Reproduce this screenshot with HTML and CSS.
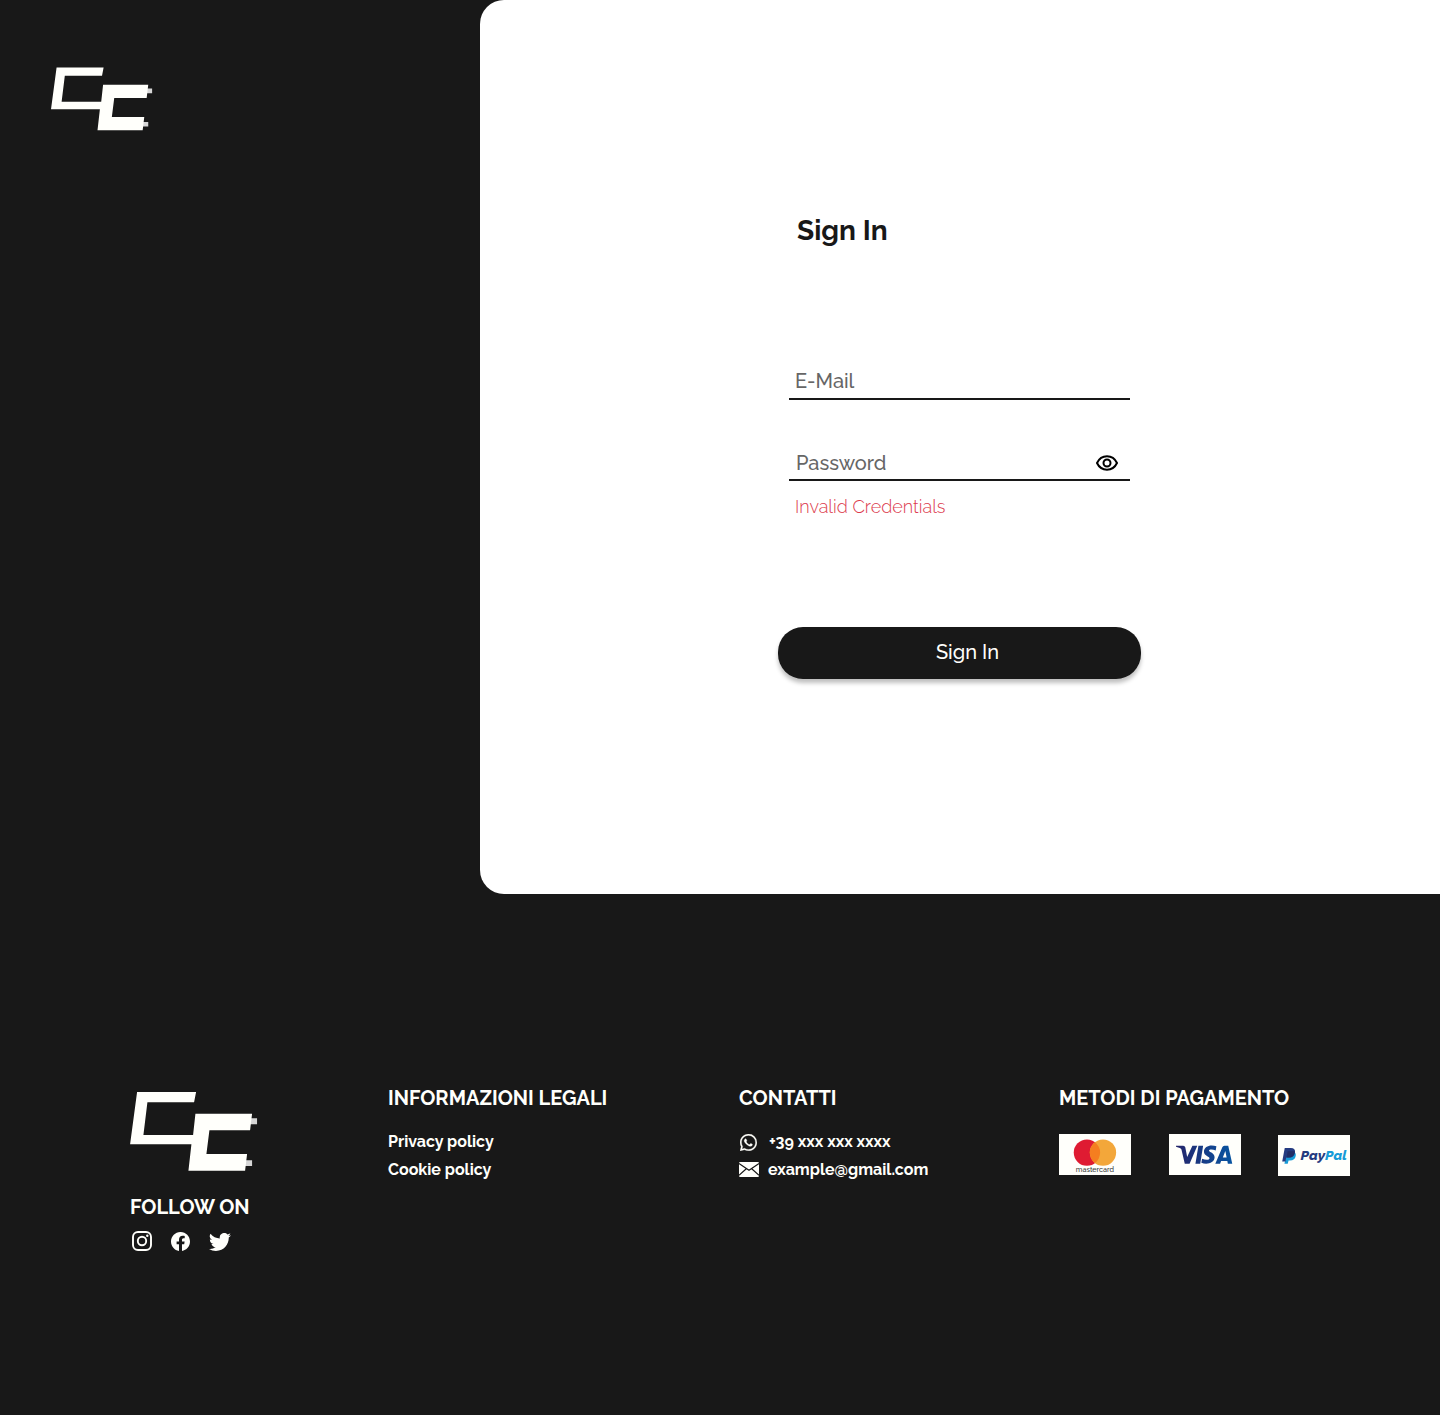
FILE: index.html
```html
<!DOCTYPE html>
<html lang="it">
<head>
<meta charset="utf-8">
<title>Sign In</title>
<link rel="stylesheet" href="styles.css">
</head>
<body>
<svg class="defs" aria-hidden="true">
  <symbol id="logo" viewBox="30 36 382 237">
    <path fill="#d6d6d6" d="M391 115h20v18h-22zM376 241h20v17h-22z"/>
    <path fill="#fffffb" d="M51 36H228L222 67H82L70 165H219L226 101H396L390 151H268L259 222H381L375 272H205L214 193H30z"/>
  </symbol>
</svg>
<main class="hero">
  <aside class="side"><svg class="side-logo"><use href="#logo"/></svg></aside>
  <section class="panel">
    <form class="form">
      <h1 class="title">Sign In</h1>
      <label class="field email">E-Mail</label>
      <label class="field password">Password
        <svg class="eye" viewBox="0 0 22 16" fill="none" stroke="#000" stroke-width="2"><path d="M1 8C3 3.800 6.600 1.300 11 1.300S19 3.800 21 8C19 12.200 15.400 14.700 11 14.700S3 12.200 1 8z"/><circle cx="11" cy="8" r="3.500"/></svg>
      </label>
      <p class="error">Invalid Credentials</p>
      <button class="submit" type="button">Sign In</button>
    </form>
  </section>
</main>
<footer class="footer">
  <div class="brand">
    <svg class="footer-logo"><use href="#logo"/></svg>
    <h2 class="heading">FOLLOW ON</h2>
    <div class="social">
      <svg class="instagram" viewBox="0 0 20 20" fill="none" stroke="#fffffb" stroke-width="1.900"><rect x="1" y="1" width="18" height="18" rx="5"/><circle cx="10" cy="10" r="4.200"/><circle cx="15.300" cy="4.700" r="1.200" fill="#fffffb" stroke="none"/></svg>
      <svg class="facebook" viewBox="0 0 16 16" fill="#fffffb"><path d="M16 8.049c0-4.446-3.582-8.050-8-8.050C3.580 0-.002 3.603-.002 8.050c0 4.017 2.926 7.347 6.750 7.951v-5.625h-2.030V8.050H6.750V6.275c0-2.017 1.195-3.131 3.022-3.131.876 0 1.791.157 1.791.157v1.980h-1.009c-.993 0-1.303.621-1.303 1.258v1.510h2.218l-.354 2.326H9.250V16c3.824-.604 6.750-3.934 6.750-7.951z"/></svg>
      <svg class="twitter" viewBox="0 2 16 13" preserveAspectRatio="none" fill="#fffffb"><path d="M5.026 15c6.038 0 9.341-5.003 9.341-9.334 0-.14 0-.282-.006-.422A6.685 6.685 0 0 0 16 3.542a6.658 6.658 0 0 1-1.889.518 3.301 3.301 0 0 0 1.447-1.817 6.533 6.533 0 0 1-2.087.793A3.286 3.286 0 0 0 7.875 6.030a9.325 9.325 0 0 1-6.767-3.429 3.289 3.289 0 0 0 1.018 4.382A3.323 3.323 0 0 1 .640 6.575v.045a3.288 3.288 0 0 0 2.632 3.218 3.203 3.203 0 0 1-.865.115 3.230 3.230 0 0 1-.614-.057 3.283 3.283 0 0 0 3.067 2.277A6.588 6.588 0 0 1 .780 13.580a6.320 6.320 0 0 1-.780-.045A9.344 9.344 0 0 0 5.026 15z"/></svg>
    </div>
  </div>
  <div class="column">
    <h2 class="heading">INFORMAZIONI LEGALI</h2>
    <a class="link">Privacy policy</a>
    <a class="link">Cookie policy</a>
  </div>
  <div class="column">
    <h2 class="heading">CONTATTI</h2>
    <a class="link phone"><svg class="whatsapp" viewBox="0 0 16 16" fill="#fffffb" stroke="#fffffb" stroke-width=".25"><path d="M13.601 2.326A7.854 7.854 0 0 0 7.994 0C3.627 0 .068 3.558.064 7.926c0 1.399.366 2.760 1.057 3.965L0 16l4.204-1.102a7.933 7.933 0 0 0 3.790.965h.004c4.368 0 7.926-3.558 7.930-7.930A7.898 7.898 0 0 0 13.600 2.326zM7.994 14.521a6.573 6.573 0 0 1-3.356-.920l-.240-.144-2.494.654.666-2.433-.156-.251a6.560 6.560 0 0 1-1.007-3.505c0-3.626 2.957-6.584 6.591-6.584a6.560 6.560 0 0 1 4.660 1.931 6.557 6.557 0 0 1 1.928 4.660c-.004 3.639-2.961 6.592-6.592 6.592z"/><path d="M11.600 9.600c-.200-.100-1.200-.600-1.400-.640-.180-.070-.320-.100-.450.100-.130.190-.510.640-.630.770-.110.130-.230.150-.430.050-.200-.100-.830-.310-1.590-.980-.590-.520-.980-1.170-1.100-1.370-.110-.200-.010-.300.090-.400.300-.300.490-.550.400-.740L5.900 4.900c-.160-.390-.320-.330-.440-.340-.400-.020-.650.010-.900.280-.900 1-.820 2 .050 3.230.900 1.300 2 2.400 3.400 3 1.200.520 1.600.560 2.200.470.400-.060 1.170-.480 1.340-.940.160-.470.160-.860.110-.950z"/></svg>+39 xxx xxx xxxx</a>
    <a class="link mail"><svg class="envelope" viewBox="0 0 20 15"><rect width="20" height="15" rx="1.300" fill="#fffffb"/><path d="M0 1.500 10 8.300 20 1.500M0 13.200 7.300 6.800M20 13.200 12.700 6.800" fill="none" stroke="#181818" stroke-width="1.150"/></svg>example@gmail.com</a>
  </div>
  <div class="column">
    <h2 class="heading">METODI DI PAGAMENTO</h2>
    <div class="cards">
      <svg class="card" viewBox="0 0 72 41"><rect width="72" height="41" fill="#fffffb"/><circle cx="27.800" cy="18.500" r="13.100" fill="#df1b32"/><circle cx="43.800" cy="18.500" r="13.100" fill="#f3a73a"/><path d="M35.800 8.100a13.100 13.100 0 0 1 0 20.800 13.100 13.100 0 0 1 0-20.800z" fill="#f57e20"/><text class="mastercard-word" x="16.800" y="37.800" textLength="38" lengthAdjust="spacingAndGlyphs">mastercard</text></svg>
      <svg class="card" viewBox="0 0 72 41"><defs><linearGradient id="visa" x1="0" x2="1"><stop stop-color="#25256a"/><stop offset="1" stop-color="#0855a2"/></linearGradient></defs><rect width="72" height="41" fill="#fffffb"/><g fill="url(#visa)"><path d="M7 11.600h7.200q1.600 0 2 1.600l1.900 9.700L23.300 11.600h4.900L20.500 29.500h-4.800L12.400 15.500q-.500-1.700-5.400-2.900zM29.300 11.600H34L31.100 29.500h-4.800zM47.200 12.300l-.7 4c-2.900-1.300-6.600-1.400-6.700.2-.1 1.700 6 2.200 5.600 7-.4 5.500-7.500 7.500-13.200 5.200l.8-4.100c3.200 1.600 7.300 1.600 7.300-.4 0-1.900-5.600-2.200-5.500-6.700.1-5.200 6.500-7.500 12.400-5.200zM55.100 11.600h3.900l4 17.900h-4.400l-.5-2.600h-6.200l-1 2.600h-4.800l7-16.300q.6-1.600 2-1.600zm1 5.300-2.500 6.500h3.800z"/></g></svg>
      <svg class="card paypal" viewBox="0 0 72 41"><rect width="72" height="41" fill="#fffffb"/><path d="M9.200 16.200h5q4 .7 3.500 4.500-.8 4.800-5.800 4.800h-1.400L9.700 28.500H6.400z" fill="#179bd7"/><path d="M6.700 13h6.100q4.800 0 4.100 4.500-.8 5-6.200 5H8.200L7.500 26.500H4.200z" fill="#253b80"/><path d="M9.600 16.200h7.200c-.3 4.200-2.300 6.300-6.100 6.300H8.500z" fill="#222d65"/><text class="paypal-word" x="22.500" y="25.300" textLength="46" lengthAdjust="spacingAndGlyphs"><tspan fill="#253b80">Pay</tspan><tspan fill="#179bd7">Pal</tspan></text></svg>
    </div>
  </div>
</footer>
</body>
</html>
```
FILE: styles.css
```css
* { box-sizing: border-box; }
body { margin: 0; min-height: 1415px; background: #181818; color: #fffffb; font-family: Raleway, Lato, "Open Sans", sans-serif; }
h1, h2, p { margin: 0; }
svg { display: block; flex: none; }
.defs { display: none; }
.hero { display: flex; height: 894px; }
.side { width: 480px; padding: 67px 0 0 51px; }
.side-logo { width: 101.5px; height: 64px; }
.panel { flex: 1; padding: 213px 0 0 298px; background: #fff; border-radius: 24px 0 0 24px; }
.form { width: 363px; display: flex; flex-direction: column; }
.title { padding-left: 19px; font-size: 28px; line-height: 36px; font-weight: 700; color: #181818; }
.field { display: flex; align-items: center; justify-content: space-between; margin: 0 11px; padding: 2px 12px 0 6px; border-bottom: 2px solid #181818; color: #666; font-size: 20px; font-weight: 500; }
.email { height: 38px; margin-top: 113px; }
.password { height: 37px; margin-top: 44px; padding-left: 7px; }
.eye { width: 22px; height: 16px; }
.error { padding-left: 17px; margin-top: 14px; font-size: 18px; line-height: 24px; font-weight: 300; color: #dc3a4d; }
.submit { height: 52px; margin-top: 108px; padding: 0 0 2px 16px; border: 0; border-radius: 25px; background: #181818; color: #fffffb; font: 500 20px Raleway, Lato, "Open Sans", sans-serif; box-shadow: 0 4px 4px rgba(0,0,0,.25); }
.footer { display: grid; grid-template-columns: 258px 351px 320px 1fr; padding: 192px 0 0 130px; }
.heading { font-size: 20px; line-height: 24px; font-weight: 700; white-space: nowrap; }
.column { display: flex; flex-direction: column; }
.column .heading { margin-bottom: 17px; }
.brand { padding-top: 6px; }
.footer-logo { width: 127.5px; height: 79px; margin-bottom: 24px; }
.social { display: flex; align-items: center; margin-top: 12px; padding-left: 2px; }
.instagram { width: 20px; height: 20px; }
.facebook { width: 19px; height: 19px; margin-left: 19px; }
.twitter { width: 22px; height: 18px; margin-left: 19px; margin-top: 2px; }
.link { display: flex; align-items: center; height: 28px; font-size: 16px; font-weight: 700; white-space: nowrap; }
.phone { gap: 12px; padding-left: 1px; }
.mail { gap: 9px; }
.whatsapp { width: 17px; height: 17px; margin-top: 3px; }
.envelope { width: 20px; height: 15px; margin-top: 1px; }
.cards { display: flex; gap: 37.500px; padding-top: 7px; }
.card { width: 72.300px; height: 41.200px; }
.paypal { margin: .600px 0 0 -.800px; }
.mastercard-word { font: 500 7.200px Raleway, Lato, sans-serif; fill: #333; }
.paypal-word { font: italic 800 12px Raleway, "Open Sans", sans-serif; }
```
